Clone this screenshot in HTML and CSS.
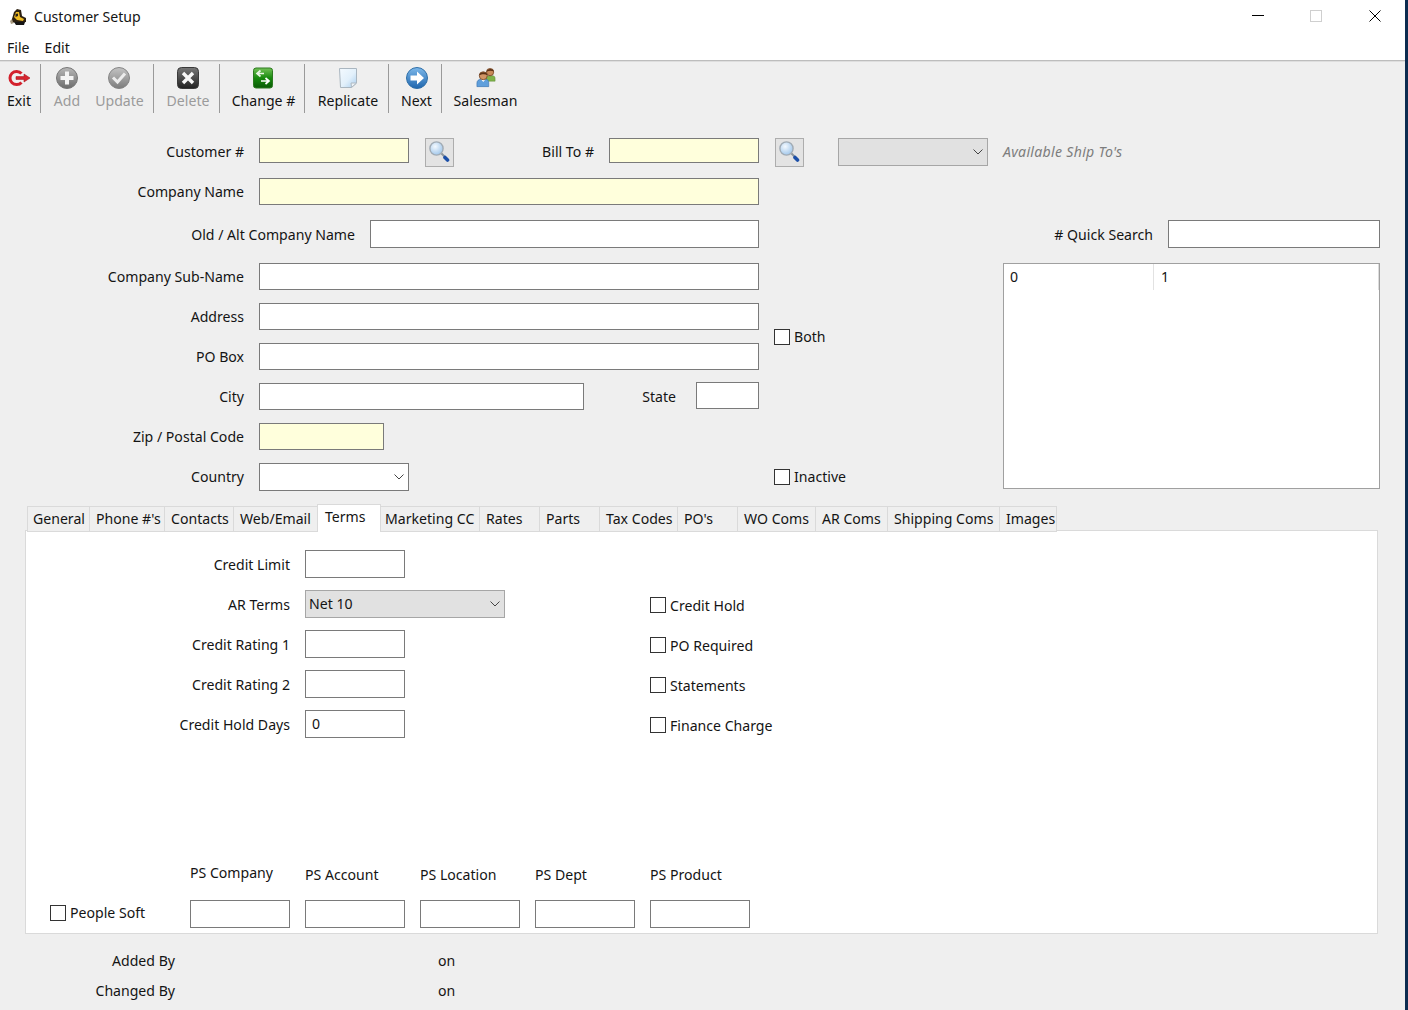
FILE: index.html
```html
<!DOCTYPE html>
<html lang="en">
<head>
<meta charset="utf-8">
<title>Customer Setup</title>
<link rel="stylesheet" href="styles.css">
</head>
<body>
<div class="window">
  <header class="titlebar">
    <svg class="app-icon" width="18" height="18" viewBox="0 0 18 18"><path d="M1 13 L4 10 L5 15 L2 16 Z" fill="#a89a80"/><path d="M3 11 L5 4 L8 1 L12 2 L13 8 L17 10 L17 14 L9 15 L4 14 Z" fill="#2c2010"/><path d="M5 9 L7 4 L10 4 L11 9 L15 11 L14 13 L8 12 Z" fill="#f0bc22"/><path d="M6.5 6 L9 5.5 L9 8 L6.5 9 Z" fill="#2a2015"/><path d="M5 14 L16 14 L15 17 L7 17 Z" fill="#151515"/></svg>
    <span class="app-title">Customer Setup</span>
    <div class="caption">
      <span class="cap-btn"><svg width="12" height="12" viewBox="0 0 12 12"><path d="M0 5.5H12" stroke="#000" fill="none"/></svg></span>
      <span class="cap-btn"><svg width="12" height="12" viewBox="0 0 12 12"><rect x=".5" y=".5" width="11" height="11" stroke="#cfcfcf" fill="none"/></svg></span>
      <span class="cap-btn close"><svg width="12" height="12" viewBox="0 0 12 12"><path d="M.5 .5L11.5 11.5M11.5 .5L.5 11.5" stroke="#000" fill="none"/></svg></span>
    </div>
  </header>
  <nav class="menubar"><span>File</span><span>Edit</span></nav>

  <div class="toolbar">
    <div class="tb-group first">
      <div class="tb">
        <svg class="tb-icon" width="24" height="22" viewBox="0 0 24 22"><path d="M14.5 6.6A6.6 6.6 0 1 0 14.5 15.4" fill="none" stroke="#d3202c" stroke-width="3"/><path d="M9 9.6H17V7L23 11L17 15V12.4H9Z" fill="#d8242e" stroke="#a81820" stroke-width=".6"/></svg>
        <span class="tb-label w-exit">Exit</span>
      </div>
    </div>
    <div class="tb-group">
      <div class="tb off">
        <svg class="tb-icon" width="22" height="22" viewBox="0 0 22 22"><defs><linearGradient id="ga" x1="0" y1="0" x2="0" y2="1"><stop offset="0" stop-color="#b8b8b8"/><stop offset="1" stop-color="#6c6c6c"/></linearGradient></defs><circle cx="11" cy="11" r="10.5" fill="url(#ga)" stroke="#777"/><path d="M9 4.5H13V9H17.5V13H13V17.5H9V13H4.5V9H9Z" fill="#f4f4f4"/></svg>
        <span class="tb-label w-add">Add</span>
      </div>
      <div class="tb off next">
        <svg class="tb-icon" width="22" height="22" viewBox="0 0 22 22"><defs><linearGradient id="gu" x1="0" y1="0" x2="0" y2="1"><stop offset="0" stop-color="#c4c4c4"/><stop offset="1" stop-color="#7c7c7c"/></linearGradient></defs><circle cx="11" cy="11" r="10.5" fill="url(#gu)" stroke="#858585"/><path d="M5 10.5L9.5 15L17 6.5" fill="none" stroke="#ececec" stroke-width="3"/></svg>
        <span class="tb-label w-update">Update</span>
      </div>
    </div>
    <div class="tb-group">
      <div class="tb off">
        <svg class="tb-icon ic-delete" width="22" height="22" viewBox="0 0 22 22"><defs><linearGradient id="gd" x1="0" y1="0" x2="0" y2="1"><stop offset="0" stop-color="#777"/><stop offset="1" stop-color="#222"/></linearGradient></defs><rect x=".5" y=".5" width="21" height="21" rx="4" fill="url(#gd)" stroke="#3a3a3a"/><path d="M6 6L16 16M16 6L6 16" stroke="#f8f8f8" stroke-width="3.4"/></svg>
        <span class="tb-label w-delete">Delete</span>
      </div>
    </div>
    <div class="tb-group">
      <div class="tb">
        <svg class="tb-icon ic-change" width="20" height="21" viewBox="0 0 20 21"><defs><linearGradient id="gc" x1="0" y1="0" x2="0" y2="1"><stop offset="0" stop-color="#74c257"/><stop offset=".5" stop-color="#178a0e"/><stop offset="1" stop-color="#0a5a06"/></linearGradient></defs><rect x=".5" y=".5" width="19" height="20" rx="2.5" fill="url(#gc)" stroke="#2c7a20"/><path d="M11 6H5M7.5 3L4 6L7.5 9" fill="none" stroke="#e8f5e2" stroke-width="1.7"/><path d="M8 13.5H15M12.5 10.5L16 13.5L12.5 16.5" fill="none" stroke="#fff" stroke-width="1.7"/></svg>
        <span class="tb-label w-change">Change #</span>
      </div>
    </div>
    <div class="tb-group">
      <div class="tb">
        <svg class="tb-icon" width="20" height="22" viewBox="0 0 20 22"><defs><linearGradient id="gr" x1="0" y1="0" x2="1" y2="1"><stop offset="0" stop-color="#f4faff"/><stop offset=".55" stop-color="#e2f0fb"/><stop offset="1" stop-color="#a8cdee"/></linearGradient></defs><path d="M1.5 1.5H18.5V16L13.5 20.5H2.5Z" fill="url(#gr)" stroke="#aab6c0"/><path d="M18.5 16L13.5 20.5L13 16Z" fill="#eef3f7" stroke="#aeb9c2"/></svg>
        <span class="tb-label w-replicate">Replicate</span>
      </div>
    </div>
    <div class="tb-group">
      <div class="tb">
        <svg class="tb-icon" width="22" height="22" viewBox="0 0 22 22"><defs><linearGradient id="gn" x1="0" y1="0" x2="0" y2="1"><stop offset="0" stop-color="#7db8ea"/><stop offset="1" stop-color="#1f66ae"/></linearGradient></defs><circle cx="11" cy="11" r="10.5" fill="url(#gn)" stroke="#2f6fa8"/><path d="M4.5 8.5H11V4.5L18 11L11 17.5V13.5H4.5Z" fill="#fff"/></svg>
        <span class="tb-label w-next">Next</span>
      </div>
    </div>
    <div class="tb-group last">
      <div class="tb">
        <svg class="tb-icon" width="20" height="22" viewBox="0 0 22 23"><path d="M11 12C11 10 12 9 14 9H18C20 9 21 10 21 12V15H11Z" fill="#7fb24a" stroke="#5a8a33" stroke-width=".5"/><circle cx="15.5" cy="5" r="4" fill="#c98a5a" stroke="#6a3a18" stroke-width=".8"/><path d="M11.6 4.6C12 1 19 .6 19.6 4.4C17 3 14 3.4 11.6 4.6Z" fill="#5a3015"/><path d="M1 21V17C1 14.5 3 13 5 13H11C13 13 14 14.5 14 17V21Z" fill="#5f9fdc" stroke="#2f6aa6" stroke-width=".6"/><path d="M5.5 13L8 16L10.5 13Z" fill="#fff"/><circle cx="8" cy="9" r="4.4" fill="#d19566" stroke="#6a3a18" stroke-width=".8"/><path d="M3.4 8.6C3.8 4.2 12 3.8 12.6 8.4C10 6.8 6 7.2 3.4 8.6Z" fill="#5a3015"/></svg>
        <span class="tb-label w-salesman">Salesman</span>
      </div>
    </div>
  </div>

  <form class="form-grid">
    <div class="row span-all">
      <label class="lbl lbl-main">Customer #</label>
      <input class="field req w150 h25">
      <button type="button" class="search s-cust"><svg width="21" height="23" viewBox="1 1 21 23"><defs><radialGradient id="gs1" cx=".4" cy=".35" r=".7"><stop offset="0" stop-color="#f4f9fe"/><stop offset="1" stop-color="#9cc4ea"/></radialGradient></defs><circle cx="8.5" cy="8.5" r="6.6" fill="url(#gs1)" stroke="#a2acb5" stroke-width="1.4"/><path d="M13.5 13.5L17 17" stroke="#8a949c" stroke-width="2"/><path d="M17 17.5L19.5 20" stroke="#1b4fa8" stroke-width="3.6" stroke-linecap="round"/></svg></button>
      <label class="lbl lbl-bill">Bill To #</label>
      <input class="field req w150 h25">
      <button type="button" class="search s-bill"><svg width="21" height="23" viewBox="1 1 21 23"><defs><radialGradient id="gs2" cx=".4" cy=".35" r=".7"><stop offset="0" stop-color="#f4f9fe"/><stop offset="1" stop-color="#9cc4ea"/></radialGradient></defs><circle cx="8.5" cy="8.5" r="6.6" fill="url(#gs2)" stroke="#a2acb5" stroke-width="1.4"/><path d="M13.5 13.5L17 17" stroke="#8a949c" stroke-width="2"/><path d="M17 17.5L19.5 20" stroke="#1b4fa8" stroke-width="3.6" stroke-linecap="round"/></svg></button>
      <div class="select disabled w150 s-ship"><span></span><svg width="10" height="6" viewBox="0 0 10 6"><path d="M.5 .5L5 5L9.5 .5" fill="none" stroke="#444"/></svg></div>
      <span class="hint">Available Ship To's</span>
    </div>

    <div class="row span-all">
      <label class="lbl lbl-main">Company Name</label>
      <input class="field req w500 h27">
    </div>

    <div class="row col-left low">
      <label class="lbl lbl-alt">Old / Alt Company Name</label>
      <input class="field w389">
    </div>
    <div class="row col-right quick low">
      <label class="lbl">#&nbsp;Quick Search</label>
      <input class="field w212">
    </div>

    <div class="row col-left r4">
      <label class="lbl lbl-main">Company Sub-Name</label>
      <input class="field w500 h27">
    </div>
    <div class="results">
      <div class="results-head"><span class="cell-a">0</span><span class="cell-b">1</span></div>
    </div>

    <div class="row col-left r5">
      <label class="lbl lbl-main">Address</label>
      <input class="field w500 h27">
    </div>
    <label class="check both"><input type="checkbox"><span>Both</span></label>

    <div class="row col-left r6">
      <label class="lbl lbl-main">PO Box</label>
      <input class="field w500 h27">
    </div>

    <div class="row col-left r7">
      <label class="lbl lbl-main">City</label>
      <input class="field w325 h27">
      <label class="lbl lbl-state">State</label>
      <input class="field w63 h27 raised">
    </div>

    <div class="row col-left r8">
      <label class="lbl lbl-main">Zip / Postal Code</label>
      <input class="field req w125 h27">
    </div>

    <div class="row col-left r9">
      <label class="lbl lbl-main">Country</label>
      <div class="select w150"><span></span><svg width="10" height="6" viewBox="0 0 10 6"><path d="M.5 .5L5 5L9.5 .5" fill="none" stroke="#444"/></svg></div>
    </div>
    <label class="check inactive"><input type="checkbox"><span>Inactive</span></label>
  </form>

  <div class="tabs">
    <span class="tab">General</span>
    <span class="tab">Phone #'s</span>
    <span class="tab">Contacts</span>
    <span class="tab">Web/Email</span>
    <span class="tab active">Terms</span>
    <span class="tab">Marketing CC</span>
    <span class="tab">Rates</span>
    <span class="tab">Parts</span>
    <span class="tab">Tax Codes</span>
    <span class="tab">PO's</span>
    <span class="tab">WO Coms</span>
    <span class="tab">AR Coms</span>
    <span class="tab">Shipping Coms</span>
    <span class="tab">Images</span>
  </div>

  <section class="panel">
    <div class="terms">
      <label class="lbl">Credit Limit</label>
      <input class="field w100">
      <span></span>

      <label class="lbl">AR Terms</label>
      <div class="select disabled w200"><span>Net 10</span><svg width="10" height="6" viewBox="0 0 10 6"><path d="M.5 .5L5 5L9.5 .5" fill="none" stroke="#444"/></svg></div>
      <label class="check"><input type="checkbox"><span>Credit Hold</span></label>

      <label class="lbl">Credit Rating 1</label>
      <input class="field w100">
      <label class="check"><input type="checkbox"><span>PO Required</span></label>

      <label class="lbl">Credit Rating 2</label>
      <input class="field w100">
      <label class="check"><input type="checkbox"><span>Statements</span></label>

      <label class="lbl">Credit Hold Days</label>
      <input class="field w100" value="0">
      <label class="check"><input type="checkbox"><span>Finance Charge</span></label>
    </div>

    <div class="ps">
      <span></span>
      <span class="ps-head first">PS Company</span>
      <span class="ps-head">PS Account</span>
      <span class="ps-head">PS Location</span>
      <span class="ps-head">PS Dept</span>
      <span class="ps-head">PS Product</span>
      <label class="check soft"><input type="checkbox"><span>People Soft</span></label>
      <input class="field w100">
      <input class="field w100">
      <input class="field w100">
      <input class="field w100">
      <input class="field w100">
    </div>
  </section>

  <footer class="audit">
    <span class="audit-lbl">Added By</span><span class="audit-on">on</span>
    <span class="audit-lbl">Changed By</span><span class="audit-on">on</span>
  </footer>
</div>
</body>
</html>
```

FILE: styles.css
```css
* { box-sizing: border-box; }
html, body { margin: 0; padding: 0; height: 100%; overflow: hidden; }
body {
  display: flex;
  background: #0c2c50;
  font-family: "Noto Sans", "Open Sans", sans-serif;
  font-size: 14.1px;
  color: #141414;
}
.window { width: 1405px; height: 1010px; background: #efefef; overflow: hidden; }

/* Title and menu */
.titlebar { height: 33px; background: #fff; display: flex; align-items: center; }
.app-icon { margin-left: 9px; flex: none; }
.app-title { margin-left: 7px; line-height: 33px; }
.caption { margin-left: auto; display: flex; padding-right: 1px; }
.cap-btn { width: 58px; height: 33px; display: flex; align-items: center; justify-content: center; padding-bottom: 1px; }
.cap-btn.close { margin-left: 1px; }
.menubar {
  height: 28px; background: #fff; border-bottom: 1px solid #bdbdbd;
  display: flex; gap: 15px; padding-left: 7px; line-height: 29px;
}

/* Toolbar */
.toolbar { display: flex; border-top: 1px solid #dedede; padding-top: 2px; }
.tb-group { display: flex; height: 49px; padding: 0 9px 0 12px; border-right: 1px solid #9a9a9a; }
.tb-group.first { padding-left: 7px; }
.tb-group.last { border-right: 0; }
.tb { display: flex; flex-direction: column; align-items: center; }
.tb.next { margin-left: 14px; }
.tb.next .tb-icon { margin-right: 2px; }
.tb-icon { margin-top: 3px; height: 22px; flex: none; }
.tb-icon.ic-change { margin-right: 2px; }
.tb-label { display: flex; justify-content: center; white-space: nowrap; line-height: 24px; }
.tb.off .tb-label { color: #9b9b9b; }
.w-exit { width: 24px; }
.w-add { width: 28px; }
.w-update { width: 49px; }
.w-delete { width: 44px; }
.w-change { width: 63px; }
.w-replicate { width: 62px; }
.w-next { width: 31px; }
.w-salesman { width: 63px; }

/* Upper form */
.form-grid {
  margin-top: 25px;
  display: grid;
  width: 1380px;
  grid-template-columns: 760px 243px 377px;
  grid-template-rows: 40px 42px 43px 40px 40px 40px 40px 40px 28px;
}
.row { display: flex; align-items: flex-start; }
.span-all { grid-column: 1 / -1; }
.col-left { grid-column: 1; }
.col-right { grid-column: 3; }
.r4 { grid-row: 4; } .r5 { grid-row: 5; } .r6 { grid-row: 6; }
.r7 { grid-row: 7; } .r8 { grid-row: 8; } .r9 { grid-row: 9; }

.lbl { line-height: 28px; text-align: right; white-space: nowrap; display: block; }
.low .lbl { line-height: 30px; }
.lbl-main { width: 244px; margin-right: 15px; }
.lbl-alt { width: 355px; margin-right: 15px; }
.lbl-bill { width: 140px; margin-right: 15px; }
.lbl-state { width: 92px; margin-right: 20px; }
.quick { justify-content: flex-end; gap: 15px; }

.field {
  display: block; height: 28px; padding: 0 6px 2px; margin: 0;
  border: 1px solid #7a7a7a; border-radius: 0; background: #fff;
  font: inherit; color: inherit; outline: 0;
}
.req { background: #ffffdc; }
.h25 { height: 25px; }
.h27 { height: 27px; }
.raised { margin-top: -1px; }
.w63 { width: 63px; } .w100 { width: 100px; } .w125 { width: 125px; }
.w150 { width: 150px; } .w200 { width: 200px; } .w212 { width: 212px; }
.w325 { width: 325px; } .w389 { width: 389px; } .w500 { width: 500px; }

.search {
  width: 29px; height: 29px; padding: 0; background: #e3e3e3;
  border: 1px solid #adadad; display: flex; align-items: center; justify-content: center;
}
.s-cust { margin-left: 16px; }
.s-bill { margin-left: 16px; }

.select {
  height: 28px; display: flex; align-items: center; justify-content: space-between;
  padding: 0 4px 0 3px; background: #fff; border: 1px solid #7a7a7a;
}
.select span { padding-bottom: 2px; }
.select.disabled { background: #e1e1e1; border-color: #a6a6a6; }
.s-ship { margin-left: 34px; }
.hint { margin-left: 15px; line-height: 28px; font-style: italic; color: #7d7d7d; letter-spacing: .3px; }

.results {
  grid-column: 3; grid-row: 4 / 10; height: 226px;
  border: 1px solid #a0a0a0; background: #fff;
}
.results-head { display: flex; height: 26px; line-height: 26px; border-right: 1px solid #dcdcdc; }
.cell-a { width: 150px; padding-left: 6px; border-right: 1px solid #e2e2e2; }
.cell-b { padding-left: 7px; }

.check { display: flex; align-items: center; gap: 4px; line-height: 30px; height: 30px; }
.check input {
  appearance: none; width: 16px; height: 16px; margin: 0; flex: none;
  background: #fff; border: 1px solid #333; border-radius: 0;
}
.both { grid-column: 2; grid-row: 5 / 7; align-self: start; margin: 19px 0 0 14px; }
.inactive { grid-column: 2; grid-row: 9; align-self: center; margin-left: 14px; }

/* Tabs */
.tabs {
  margin: 13px 0 -1px 27px; height: 27px; display: grid; align-items: end;
  grid-template-columns: 62px 75px 69px 84px 64px 98px 60px 60px 78px 60px 78px 72px 112px 58px;
  position: relative; z-index: 1;
}
.tab {
  height: 26px; line-height: 24px; padding-left: 6px; white-space: nowrap;
  background: #efefef; border: 1px solid #dadada; border-right-width: 0;
}
.tab:first-child { padding-left: 5px; }
.tab:last-child { border-right-width: 1px; }
.tab.active {
  height: 28px; line-height: 24px; padding-left: 7px;
  background: #fff; border: 1px solid #dadada; border-bottom: 0;
}
.tab.active + .tab { border-left-width: 0; padding-left: 4px; }

/* Terms panel */
.panel {
  width: 1353px; height: 404px; margin-left: 25px; padding-top: 19px;
  background: #fff; border: 1px solid #dadada;
}
.terms {
  display: grid; grid-template-columns: 264px 200px 1fr; column-gap: 15px;
  grid-auto-rows: 40px; height: 200px;
}
.terms .lbl { line-height: 30px; }
.terms .check { margin-left: 130px; }
.terms .check span { padding-top: 2px; }
.ps {
  margin-top: 110px;
  display: grid; grid-template-columns: 149px repeat(5, 100px); column-gap: 15px;
  grid-template-rows: 40px 28px;
}
.ps-head { line-height: 30px; white-space: nowrap; }
.ps-head.first { line-height: 26px; }
.soft { margin-left: 24px; margin-top: -2px; white-space: nowrap; }

/* Audit */
.audit {
  margin-top: 12px; display: grid; grid-template-columns: 175px auto; column-gap: 263px;
  grid-auto-rows: 30px; line-height: 30px; justify-content: start;
}
.audit-lbl { text-align: right; }
```
